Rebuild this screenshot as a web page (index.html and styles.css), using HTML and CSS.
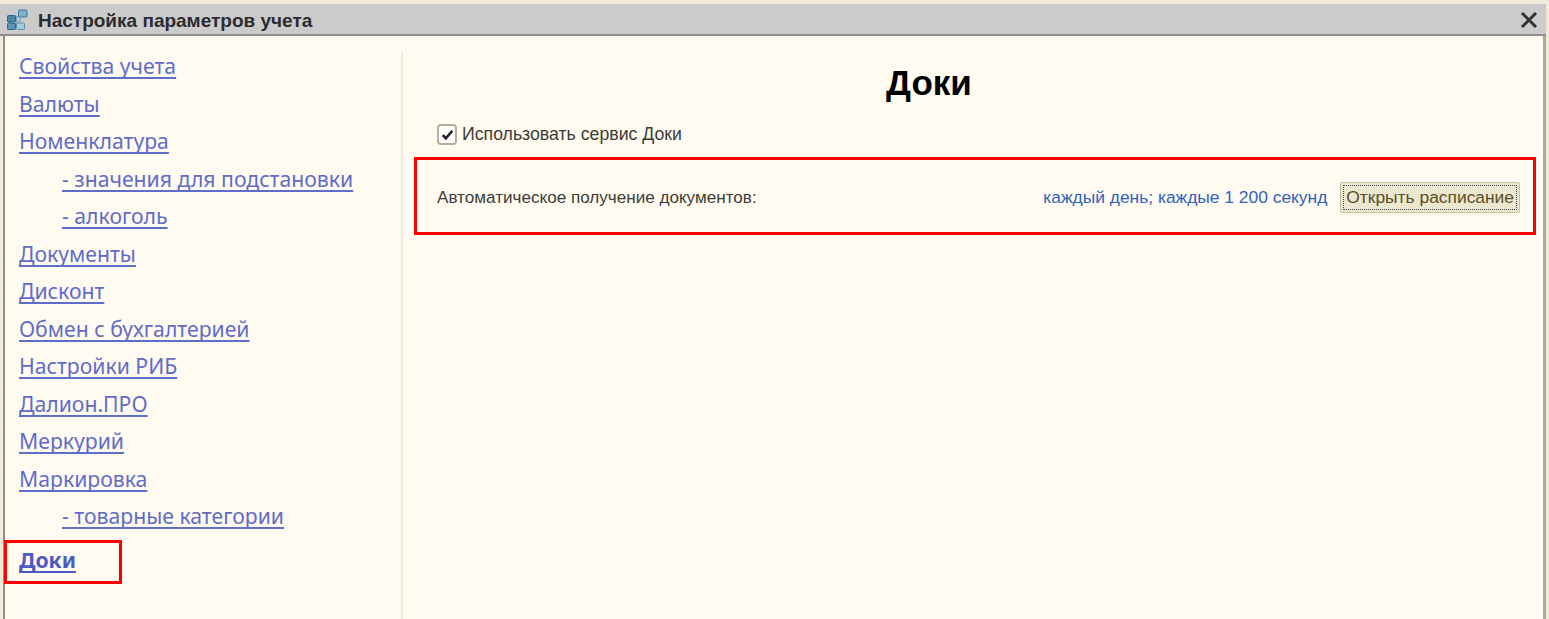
FILE: index.html
```html
<!DOCTYPE html>
<html lang="ru">
<head>
<meta charset="utf-8">
<title>Настройка параметров учета</title>
<link rel="stylesheet" href="styles.css">
</head>
<body>
<div class="window">
  <header class="titlebar">
    <svg class="app-icon" width="22" height="22" viewBox="0 0 22 22">
      <rect x="0.5" y="6.5" width="8" height="6.5" rx="1" fill="#4f86a8" stroke="#2f6384"/>
      <rect x="9.5" y="7.5" width="3.5" height="5.5" fill="#a9c9dc" stroke="#7aa3bc"/>
      <rect x="11.5" y="1" width="8.5" height="7" rx="1" fill="#7fb0cc" stroke="#3f7698"/>
      <rect x="0.5" y="14" width="8" height="6.5" rx="1" fill="#5f95b6" stroke="#2f6384"/>
      <rect x="9.5" y="14" width="8" height="6.5" rx="1" fill="#a9c9dc" stroke="#5d8fae"/>
    </svg>
    <span class="title">Настройка параметров учета</span>
    <svg class="close" width="18" height="18" viewBox="0 0 18 18"><path d="M2 2 16 16M16 2 2 16" stroke="#333" stroke-width="3" fill="none"/></svg>
  </header>
  <div class="body">
    <nav class="nav">
      <a class="link" href="#">Свойства учета</a>
      <a class="link" href="#">Валюты</a>
      <a class="link" href="#">Номенклатура</a>
      <a class="link sub" href="#">- значения для подстановки</a>
      <a class="link sub" href="#">- алкоголь</a>
      <a class="link" href="#">Документы</a>
      <a class="link" href="#">Дисконт</a>
      <a class="link" href="#">Обмен с бухгалтерией</a>
      <a class="link" href="#">Настройки РИБ</a>
      <a class="link" href="#">Далион.ПРО</a>
      <a class="link" href="#">Меркурий</a>
      <a class="link" href="#">Маркировка</a>
      <a class="link sub" href="#">- товарные категории</a>
      <a class="link current" href="#">Доки</a>
    </nav>
    <main class="content">
      <h1 class="heading">Доки</h1>
      <label class="check-row">
        <span class="checkbox"><svg width="15" height="15" viewBox="0 0 14 14"><path d="M2.5 7.5 5.5 10.5 11.5 3.5" stroke="#222" stroke-width="2.4" fill="none"/></svg></span>
        <span>Использовать сервис Доки</span>
      </label>
      <div class="schedule">
        <span class="schedule-label">Автоматическое получение документов:</span>
        <a class="schedule-value" href="#">каждый день; каждые 1 200 секунд</a>
        <button class="open-btn" type="button"><span class="focus">Открыть расписание</span></button>
      </div>
    </main>
  </div>
  <div class="mark mark-nav"></div>
</div>
</body>
</html>
```
FILE: styles.css
```css
* { box-sizing: border-box; }
html, body { margin: 0; height: 100%; overflow: hidden; }
body { background: #fffbf0; font-family: "Liberation Sans", Arial, sans-serif; }
.window {
  position: relative;
  width: 1549px;
  height: 619px;
  padding: 3px 3px 0 0;
  background: #efebd8;
  display: flex;
  flex-direction: column;
}
.titlebar {
  height: 33px;
  flex: none;
  display: flex;
  align-items: center;
  padding: 2px 8px 0 7px;
  background: #cbcbcb;
  border-top: 1px solid #e4e4e4;
  border-bottom: 2px solid #8f8f8f;
}
.app-icon { flex: none; margin-right: 9px; }
.title { font-size: 19px; font-weight: bold; color: #2b2b30; flex: 1; padding-top: 2px; }
.close { flex: none; }
.body {
  flex: 1;
  display: flex;
  background: #fffbf0;
  border-left: 2px solid #8d8d8d;
  border-right: 3px solid #a8a8a8;
  margin-left: 3px;
  padding-top: 16px;
  min-height: 0;
}
.nav {
  width: 398px;
  flex: none;
  display: flex;
  flex-direction: column;
  align-items: flex-start;
  gap: 13.5px;
  padding: 2px 0 0 14px;
  border-right: 2px solid #eeeadc;
}
.link {
  font-family: "Noto Sans", "Liberation Sans", sans-serif;
  font-size: 21.2px;
  line-height: 24px;
  color: #5f6cc9;
  text-decoration: underline;
  text-decoration-skip-ink: none;
  text-underline-offset: 3px;
}
.sub { margin-left: 43px; }
.current { font-weight: bold; color: #4a5ac4; margin-top: 6px; }
.content { flex: 1; min-width: 0; padding: 0 7px 0 11px; }
.heading {
  margin: 12px 92px 0 0;
  font-size: 35px;
  line-height: 38px;
  font-weight: bold;
  text-align: center;
  color: #000;
}
.check-row {
  display: flex;
  align-items: center;
  gap: 5px;
  margin: 20px 0 0 23px;
  font-size: 17.7px;
  line-height: 24px;
  color: #3b3b36;
}
.checkbox {
  width: 20px;
  height: 21px;
  display: flex;
  align-items: center;
  justify-content: center;
  background: #fff;
  border: 2px solid #b5b092;
  border-radius: 4px;
}
.schedule {
  height: 78px;
  margin-top: 11px;
  display: flex;
  align-items: center;
  padding: 2px 13px 0 20px;
  border: 3px solid #f00;
  font-size: 17.4px;
}
.schedule-label { flex: 1; font-size: 17.1px; color: #3d3d38; padding-top: 1px; }
.schedule-value { color: #2f62c0; text-decoration: none; margin-right: 13px; }
.open-btn {
  height: 31px;
  padding: 2px;
  background: #ece7d0;
  border: 1px solid #c6c09c;
  border-radius: 2px;
  font: 17.4px "Liberation Sans", Arial, sans-serif;
  color: #5a4f24;
}
.focus { display: block; padding: 0 2px; line-height: 23px; border: 1px dotted #444; }
.mark {
  position: absolute;
  border: 3px solid #f00;
}
.mark-nav { left: 4px; top: 540px; width: 118px; height: 44px; }
```
